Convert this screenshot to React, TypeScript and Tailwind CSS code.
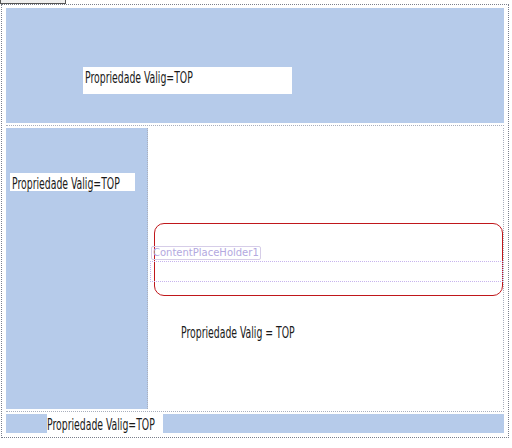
const label = "inline-block origin-left scale-x-[0.69] font-['DejaVu_Sans_Condensed','DejaVu_Sans',sans-serif] text-[15px] leading-[15px] text-[#1a1a1a] whitespace-nowrap [font-stretch:condensed]";

export default function App() {
  return (
    <div className="w-[512px] h-[448px] bg-white relative overflow-hidden">
      {/* master tab */}
      <div className="absolute left-0 top-[-10px] w-[66px] h-[14px] border border-[#555] bg-[#eee]" />
      <div className="absolute left-[1px] top-[4px] w-[508px] h-[434px] border border-dotted border-[#7a7f8c] flex flex-col p-[4px] pt-[3px] gap-[2px]">
        {/* header */}
        <div className="h-[115px] bg-[#b6cbea] pl-[77px] pt-[59px]">
          <div className="w-[209px] h-[27px] bg-white pl-[2px] pt-[2px] leading-none">
            <span className={label}>Propriedade Valig=TOP</span>
          </div>
        </div>
        <div className="border-t border-dotted border-[#a9afbd]" />
        {/* body */}
        <div className="flex h-[283px]">
          <div className="w-[142px] bg-[#b6cbea] pt-[45px] pl-[4px] border-r border-dotted border-[#a9afbd]">
            <div className="w-[125px] h-[18px] bg-white pl-[2px] pt-[2px] leading-none">
              <span className={label}>Propriedade Valig=TOP</span>
            </div>
          </div>
          <div className="flex-1 border-r border-dotted border-[#a9afbd] pt-[95px] pl-[6px]">
            <div className="h-[73px] border border-[#c0171b] rounded-[10px] relative">
              <div className="absolute left-[-4px] top-[22px] h-[14px] px-[1px] border border-[#d6cde8] rounded-[2px] font-['DejaVu_Sans',sans-serif] text-[10px] leading-[12px] text-[#b3a8e0]">
                ContentPlaceHolder1
              </div>
              <div className="absolute left-[-5px] right-[-1px] top-[37px] h-[21px] border border-dotted border-[#c7b4ee]" />
            </div>
            <div className="pl-[27px] pt-[28px] leading-none">
              <span className={label}>Propriedade Valig = TOP</span>
            </div>
          </div>
        </div>
        <div className="border-t border-dotted border-[#a9afbd]" />
        {/* footer */}
        <div className="h-[19px] bg-[#b6cbea] pl-[41px]">
          <div className="w-[116px] h-[19px] bg-white pt-[2px] leading-none">
            <span className={label}>Propriedade Valig=TOP</span>
          </div>
        </div>
      </div>
    </div>
  );
}
